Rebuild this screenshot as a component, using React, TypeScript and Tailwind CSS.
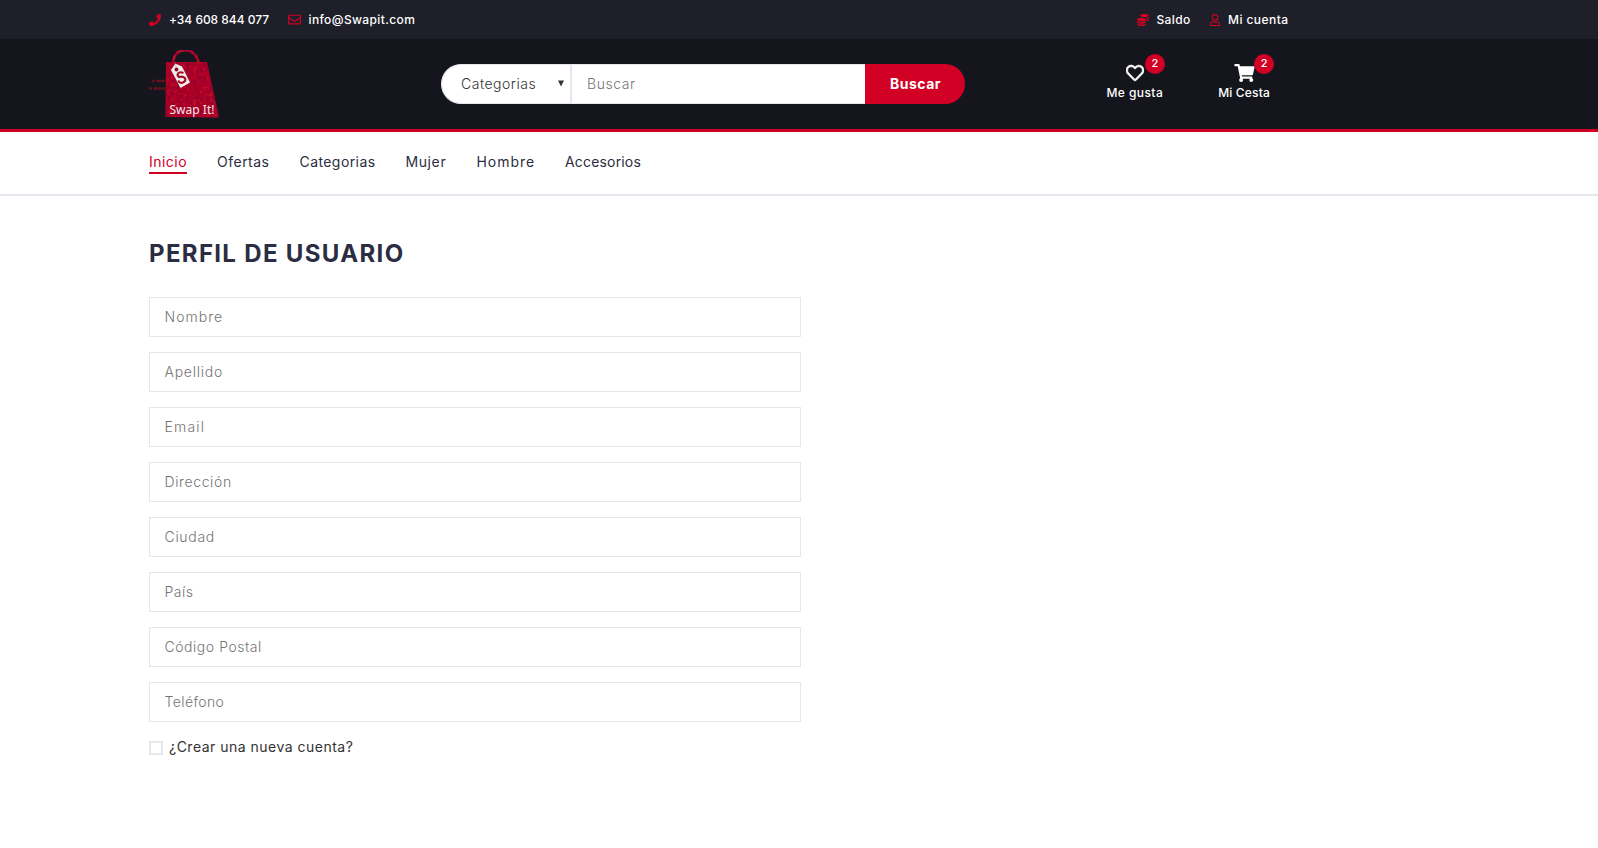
import type { ReactNode } from "react";
import { FaCoins, FaPhone, FaRegEnvelope, FaRegHeart, FaRegUser, FaShoppingCart } from "react-icons/fa";

const NAV = [
  { label: "Ofertas", style: "w-[52.5px] tracking-[0.496px]" },
  { label: "Categorias", style: "w-[76px] tracking-[0.42px]" },
  { label: "Mujer", style: "w-[41px] tracking-[0.6px]" },
  { label: "Hombre", style: "w-[58.5px] tracking-[0.95px]" },
  { label: "Accesorios", style: "w-[76px] tracking-[0.173px]" },
];

const FIELDS = [
  { label: "Nombre", style: "placeholder:tracking-[1.05px]" },
  { label: "Apellido", style: "placeholder:tracking-[0.74px]" },
  { label: "Email", style: "placeholder:tracking-[1.2px]" },
  { label: "Dirección", style: "placeholder:tracking-[0.62px]" },
  { label: "Ciudad", style: "placeholder:tracking-[0.7px]" },
  { label: "País", style: "placeholder:tracking-[0.5px]" },
  { label: "Código Postal", style: "placeholder:tracking-[0.54px]" },
  { label: "Teléfono", style: "placeholder:tracking-[0.4px]" },
];

function Logo() {
  return (
    <svg width="72" height="72" viewBox="148 48 72 72" role="img">
      <defs>
        <filter id="leather" x="0" y="0" width="100%" height="100%">
          <feTurbulence type="fractalNoise" baseFrequency="0.3" numOctaves="2" seed="4" result="noise" />
          <feColorMatrix
            in="noise"
            type="matrix"
            values="0 0 0 0 0.25  0 0 0 0 0  0 0 0 0 0.03  2.2 0 0 0 -0.75"
            result="shade"
          />
          <feComposite in="shade" in2="SourceGraphic" operator="in" result="clipped" />
          <feMerge>
            <feMergeNode in="SourceGraphic" />
            <feMergeNode in="clipped" />
          </feMerge>
        </filter>
      </defs>
      <g filter="url(#leather)">
        <path d="M173 64C173 54 179 50.3 185 50.3C192 50.3 197 55 199 64" fill="none" stroke="#b8142c" strokeWidth="2.6" />
        <path d="M166 62H207L219 117.5L165.500 117Z" fill="#b80e28" />
      </g>
      <path d="M171 70L175.300 63.500L182 66.500L190 82.500L180.500 88Z" fill="#f0eeee" />
      <path d="M176 64v6" stroke="#c6c2c4" strokeWidth="1" />
      <circle cx="176.500" cy="69.500" r="1.900" fill="#8f0c20" />
      <path d="M183.500 73C178.500 70.700 175.500 75 179.300 77C183.800 75.500 187.200 79 184.300 81.700C182 83.500 179 83 178.300 80.500" fill="none" stroke="#a20a22" strokeWidth="2.200" />
      <path d="M152 81h3m1.500 0h9" stroke="#66101f" strokeWidth="2.600" strokeDasharray="3.500 .4" />
      <path d="M149 88.500h3m1.500 0h13" stroke="#66101f" strokeWidth="2.600" strokeDasharray="4 .4" />
      <text x="169.500" y="113.500" textLength="45" lengthAdjust="spacing" className="fill-[#f3e9eb] font-['Noto_Sans',sans-serif] text-[12px]">
        Swap It!
      </text>
    </svg>
  );
}

function Shortcut({ icon, label, className }: { icon: ReactNode; label: string; className: string }) {
  return (
    <a href="#" className="relative flex flex-col items-center">
      <span className="flex h-[18px] items-center">{icon}</span>
      <span className={"mt-[3px] text-[12px] font-medium leading-[15px] whitespace-nowrap " + className}>{label}</span>
      <span className="absolute -top-[10px] left-1/2 ml-[10px] flex size-5 items-center justify-center rounded-full bg-[#d10024] pb-px text-[11px] leading-none font-medium">
        2
      </span>
    </a>
  );
}

export default function App() {
  return (
    <div className="min-h-[848px] bg-white font-['Inter',sans-serif] text-[14px] text-[#333333]">
      <div className="h-[39px] bg-[#1e1f29] text-[12px] font-medium text-white">
        <div className="ml-[149px] flex h-[39px] w-[1140px] items-center justify-between whitespace-nowrap">
          <div className="flex items-center">
            <FaPhone className="size-3 text-[#d10024]" />
            <span className="ml-2 w-[101px] tracking-[-0.03px]">+34 608 844 077</span>
            <FaRegEnvelope className="ml-[18px] size-[13px] text-[#d10024]" />
            <span className="ml-[7.500px] tracking-[0.38px]">info@Swapit.com</span>
          </div>
          <div className="flex items-center">
            <FaCoins className="size-3 text-[#d10024]" />
            <span className="ml-[7.500px] w-[34px] tracking-[0.35px]">Saldo</span>
            <FaRegUser className="ml-[18.500px] h-3 w-[12px] text-[#d10024]" />
            <span className="ml-[7px] w-[61px] tracking-[0.44px]">Mi cuenta</span>
          </div>
        </div>
      </div>

      <header className="h-[93px] border-b-[3px] border-[#d10024] bg-[#15161d]">
        <div className="ml-[148px] flex w-[1150px] items-start">
          <a href="#" className="mt-[9px]">
            <Logo />
          </a>
          <form className="mt-[25px] ml-[221px] flex h-10 w-[524px]">
            <div className="flex w-[131px] items-center rounded-l-full border border-r-2 border-[#e4e7ed] bg-white pr-[6px] pb-[2px] pl-[19px] font-light">
              <span className="tracking-[0.5px]">Categorias</span>
              <svg width="6" height="7" viewBox="0 0 6 7" className="ml-auto">
                <path d="M0 0.500H6L3 6.500Z" fill="#333" />
              </svg>
            </div>
            <input
              placeholder="Buscar"
              className="w-[293px] border-y border-[#e4e7ed] bg-white px-[15px] pb-[2px] font-light outline-none placeholder:tracking-[0.55px] placeholder:text-[#757575]"
            />
            <button type="button" className="w-[100px] rounded-r-full bg-[#d10024] pb-[2px] pl-px text-center font-bold tracking-[0.5px] text-white">
              Buscar
            </button>
          </form>
          <div className="mt-[25px] ml-[141.5px] flex gap-[55px] text-white">
            <Shortcut
              icon={<FaRegHeart className="size-[18px]" stroke="currentColor" strokeWidth="18" />}
              label="Me gusta"
              className="tracking-[0.42px]"
            />
            <Shortcut icon={<FaShoppingCart className="h-[18px] w-[21px]" />} label="Mi Cesta" className="tracking-[0.18px]" />
          </div>
        </div>
      </header>

      <nav className="h-16 border-b-2 border-[#e4e7ed]">
        <div className="ml-[149px] flex gap-[30px] pt-5 leading-5 whitespace-nowrap text-[#2b2d42]">
          <a href="#" className="h-[22px] w-[38px] border-b-2 border-[#d10024] tracking-[0.47px] text-[#d10024]">
            Inicio
          </a>
          {NAV.map(({ label, style }) => (
            <a key={label} href="#" className={style}>
              {label}
            </a>
          ))}
        </div>
      </nav>

      <main className="ml-[149px] w-[652px] pt-[43px]">
        <h3 className="text-[24px] leading-[30px] font-bold tracking-[1.33px] text-[#2b2d42]">PERFIL DE USUARIO</h3>
        <div className="mt-7 flex flex-col gap-[15px]">
          {FIELDS.map(({ label, style }) => (
            <input
              key={label}
              placeholder={label}
              className={"h-10 w-full border border-[#e4e7ed] bg-white px-[14.5px] pb-[2px] font-light outline-none placeholder:text-[#757575] " + style}
            />
          ))}
        </div>
        <label className="mt-[14px] flex h-5 items-center">
          <span className="mt-[3px] size-[14px] border-2 border-[#e4e7ed] bg-white" />
          <span className="ml-[6px] tracking-[0.49px]">¿Crear una nueva cuenta?</span>
        </label>
      </main>
    </div>
  );
}
